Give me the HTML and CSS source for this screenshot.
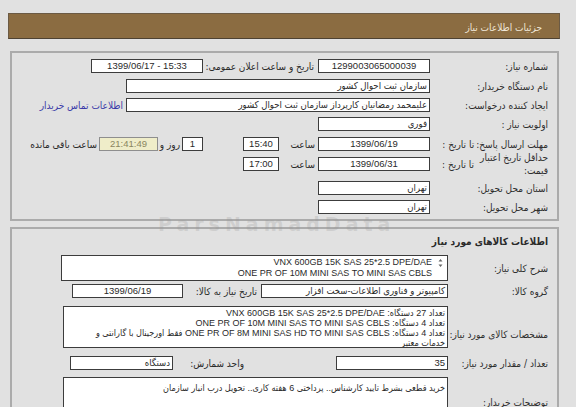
FILE: index.html
```html
<!DOCTYPE html>
<html lang="fa" dir="rtl">
<head>
<meta charset="utf-8">
<title>جزئیات اطلاعات نیاز</title>
<link rel="stylesheet" href="styles.css">
</head>
<body>
<div class="page">
  <div class="header">جزئیات اطلاعات نیاز</div>

  <div class="panel p1">
    <div class="row">
      <div class="lab">شماره نیاز:</div>
      <div class="box w112 c">1299003065000039</div>
      <div class="lab2">تاریخ و ساعت اعلان عمومی:</div>
      <div class="box w112 c">1399/06/17 - 15:33</div>
    </div>
    <div class="row g6">
      <div class="lab">نام دستگاه خریدار:</div>
      <div class="box w304">سازمان ثبت احوال کشور</div>
    </div>
    <div class="row">
      <div class="lab">ایجاد کننده درخواست:</div>
      <div class="box w304">علیمحمد رمضانیان کارپرداز سازمان ثبت احوال کشور</div>
      <a class="link" href="#">اطلاعات تماس خریدار</a>
    </div>
    <div class="row">
      <div class="lab">اولویت نیاز :</div>
      <div class="box w112">فوری</div>
    </div>
    <div class="row g6">
      <div class="lab split"><span>مهلت ارسال پاسخ:</span><span class="sub">تا تاریخ :</span></div>
      <div class="box w112 c">1399/06/19</div>
      <div class="hour">ساعت</div>
      <div class="box w36 c">15:40</div>
      <div class="box w21 c day">1</div>
      <div class="rooz">روز و</div>
      <div class="box remain c">21:41:49</div>
      <div class="remlab">ساعت باقی مانده</div>
    </div>
    <div class="row tall">
      <div class="lab split"><span class="two">حداقل تاریخ اعتبار<br>قیمت:</span><span class="sub">تا تاریخ :</span></div>
      <div class="box w112 c">1399/06/31</div>
      <div class="hour">ساعت</div>
      <div class="box w36 c">17:00</div>
    </div>
    <div class="row g4">
      <div class="lab">استان محل تحویل:</div>
      <div class="box w112">تهران</div>
    </div>
    <div class="row">
      <div class="lab">شهر محل تحویل:</div>
      <div class="box w112">تهران</div>
    </div>
  </div>

  <div class="panel p2">
    <div class="title">اطلاعات کالاهای مورد نیاز</div>
    <div class="row2 desc">
      <div class="lab l2">شرح کلی نیاز:</div>
      <div class="area a1">
        <svg class="spin" width="5" height="10" viewBox="0 0 5 10"><path d="M2.5 1 L4.5 3.5 L0.5 3.5 Z M2.5 9 L4.5 6.5 L0.5 6.5 Z" fill="#666"/></svg>
        <div class="lines">VNX 600GB 15K SAS 25*2.5 DPE/DAE<br>ONE PR OF 10M MINI SAS TO MINI SAS CBLS</div>
      </div>
    </div>
    <div class="row2 grp">
      <div class="lab l2">گروه کالا:</div>
      <div class="box w187 fa">کامپیوتر و فناوری اطلاعات-سخت افزار</div>
      <div class="lab3">تاریخ نیاز به کالا:</div>
      <div class="box w111 c">1399/06/19</div>
    </div>
    <div class="row2 spec">
      <div class="lab l2 specl">مشخصات کالای مورد نیاز:</div>
      <div class="area a2">تعداد 27 دستگاه: VNX 600GB 15K SAS 25*2.5 DPE/DAE<br>تعداد 4 دستگاه: ONE PR OF 10M MINI SAS TO MINI SAS CBLS<br>تعداد 4 دستگاه: ONE PR OF 8M MINI SAS HD TO MINI SAS CBLS فقط اورجینال با گارانتی و<br>خدمات معتبر</div>
    </div>
    <div class="row2 qty">
      <div class="lab l2">تعداد / مقدار مورد نیاز:</div>
      <div class="box w112">35</div>
      <div class="lab4">واحد شمارش:</div>
      <div class="box w103">دستگاه</div>
    </div>
    <div class="row2 notes">
      <div class="lab l2 notel">توضیحات خریدار:</div>
      <div class="area a3">خرید قطعی بشرط تایید کارشناس.. پرداختی 6 هفته کاری.. تحویل درب انبار سازمان</div>
    </div>
  </div>

  <div class="wm">ParsNamadData</div>
</div>
</body>
</html>
```

FILE: styles.css
```css
html, body {
  margin: 0;
  padding: 0;
  background: #e1e1e1;
}
body {
  font-family: "Liberation Sans", "DejaVu Sans Condensed", "DejaVu Sans", sans-serif;
  color: #2a2a2a;
  overflow: hidden;
  height: 407px;
}
.page {
  direction: rtl;
  width: 576px;
  padding-top: 13px;
  position: relative;
}
.header {
  margin: 0 16px 0 8px;
  height: 24px;
  background: #8b6c41;
  border: 1px solid #6b5a44;
  border-bottom-color: #4e4232;
  color: #efe6d6;
  font-family: "DejaVu Sans Condensed", "DejaVu Sans", sans-serif;
  font-size: 10px;
  line-height: 28px;
  padding-right: 17px;
}
.panel {
  margin: 12px 17px 0 10px;
  border: 2px solid #ababab;
  padding-right: 9px;
}
.p1 {
  display: flex;
  flex-direction: column;
  gap: 5px;
  padding-top: 6px;
  padding-bottom: 5px;
}
.row {
  display: flex;
  align-items: center;
  height: 14px;
}
.row.g6 { margin-top: 1px; }
.row.g4 { margin-top: -1px; }
.row.tall { height: 26px; margin-top: -5px; }
.lab, .lab2, .lab3, .lab4, .link, .hour, .rooz, .remlab, .title {
  font-family: "DejaVu Sans Condensed", "DejaVu Sans", sans-serif;
  font-size: 10px;
  white-space: nowrap;
  flex: none;
}
.lab {
  width: 118px;
  color: #2e2e2e;
}
.lab.split {
  display: flex;
  align-items: center;
}
.lab.split .sub {
  margin-right: 2px;
}
.lab .two {
  display: block;
  line-height: 13px;
  width: 72px;
}
.box {
  box-sizing: border-box;
  height: 14px;
  background: #fff;
  border: 1px solid #3c3c3c;
  font-size: 9.5px;
  line-height: 12px;
  padding: 0 2px;
  white-space: nowrap;
  overflow: hidden;
  flex: none;
}
.box.c { text-align: center; direction: ltr; }
.box.fa { font-family: "DejaVu Sans Condensed", "DejaVu Sans", sans-serif; }
.w112 { width: 112px; }
.w304 { width: 304px; }
.w36 { width: 36px; }
.w21 { width: 21px; }
.w187 { width: 187px; }
.w111 { width: 111px; }
.w103 { width: 103px; }
.lab2 {
  width: 115px;
  box-sizing: border-box;
  padding-right: 4px;
}
.link {
  margin-right: 3px;
  color: #3a3aa8;
  text-decoration: none;
}
.hour {
  width: 39px;
  box-sizing: border-box;
  padding-right: 3px;
}
.day { margin-right: 40px; }
.rooz {
  margin-right: 2px;
  width: 22px;
}
.box.remain {
  width: 59px;
  background: #efedc9;
  border-color: #8e8e8e;
  color: #8a8660;
}
.remlab {
  margin-right: 2px;
}

.p2 {
  margin-top: 6px;
  padding-top: 6px;
  height: 400px;
}
.title {
  font-weight: bold;
  line-height: 14px;
  color: #2a2a2a;
}
.row2 {
  display: flex;
  align-items: center;
}
.lab.l2 { width: 100px; }
.desc { margin-top: 6px; }
.area {
  box-sizing: border-box;
  background: #fff;
  border: 1px solid #3c3c3c;
  width: 385px;
  font-size: 9px;
  line-height: 10.5px;
  padding: 1px 2px;
  flex: none;
  white-space: nowrap;
  overflow: hidden;
}
.a1 {
  width: 387px;
  height: 26px;
  display: flex;
  align-items: flex-start;
  padding: 1px 4px;
  line-height: 11px;
}
.a1 .spin { margin-top: 1px; margin-left: 6px; flex: none; }
.grp { margin-top: 3px; }
.lab3 {
  width: 78px;
  box-sizing: border-box;
  padding-right: 4px;
}
.spec { margin-top: 8px; align-items: flex-start; }
.specl { margin-top: 23px; }
.a2 {
  height: 42px;
  line-height: 10px;
  padding-top: 1px;
}
.qty { margin-top: 8px; }
.lab4 {
  width: 163px;
  box-sizing: border-box;
  padding-right: 92px;
}
.notes { margin-top: 7px; align-items: flex-start; }
.notel { margin-top: 20px; }
.a3 {
  height: 60px;
  padding-top: 4px;
  line-height: 12px;
}
.wm {
  position: absolute;
  left: 158px;
  top: 212px;
  direction: ltr;
  font-family: "DejaVu Sans", sans-serif;
  font-weight: bold;
  font-size: 19px;
  line-height: 24px;
  letter-spacing: 5px;
  color: rgba(150, 150, 150, 0.25);
  pointer-events: none;
}
```
